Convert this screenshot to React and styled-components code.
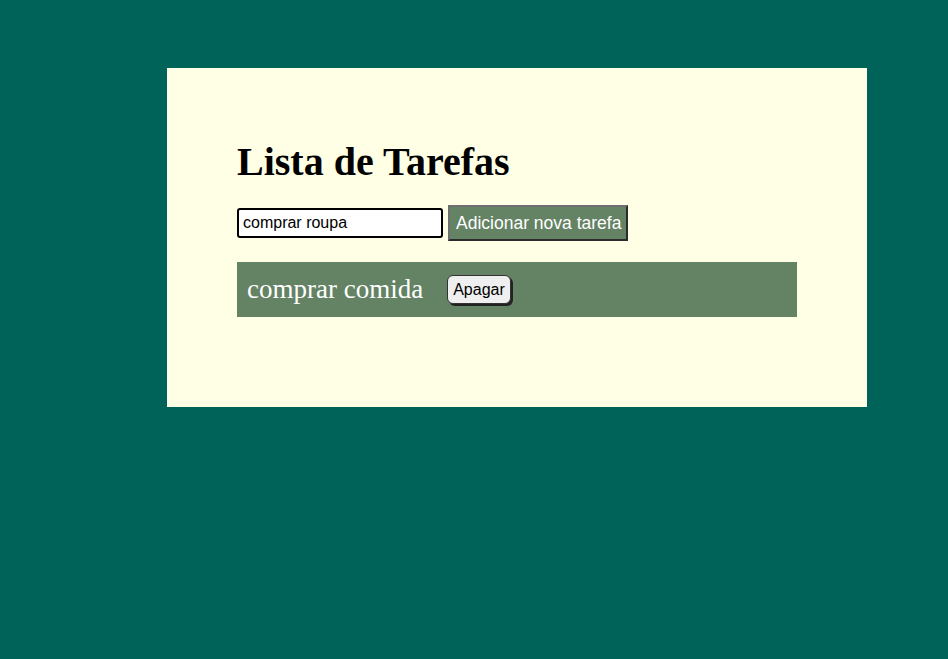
import React, { useState } from "react";
import styled, { createGlobalStyle } from "styled-components";

const Global = createGlobalStyle`
  html, body {
    margin: 0;
    padding: 0;
    background-color: #00635a;
    min-height: 100vh;
  }
`;

const Page = styled.div`
  padding: 68px 0 0 167px;
`;

const Card = styled.div`
  background-color: #ffffe6;
  width: 560px;
  padding: 72px 70px 90px 70px;
  font-family: "Liberation Serif", "Times New Roman", serif;
`;

const Title = styled.h1`
  margin: 0 0 21px 0;
  font-size: 40px;
  font-weight: bold;
  line-height: 1.1;
  color: #000;
`;

const Form = styled.div`
  display: flex;
  align-items: center;
  gap: 5px;
  margin-bottom: 21px;
`;

const Input = styled.input`
  width: 206px;
  height: 30px;
  box-sizing: border-box;
  border: 2px solid #000;
  border-radius: 3px;
  padding: 0 4px;
  font-family: "Liberation Sans", Arial, sans-serif;
  font-size: 16px;
  color: #000;
  background: #fff;
  outline: none;
`;

const AddBtn = styled.button`
  height: 36px;
  box-sizing: border-box;
  background-color: #648264;
  color: #fff;
  border: 2px solid;
  border-color: #6f6f6f #2b2b2b #2b2b2b #6f6f6f;
  padding: 0 5px 0 6px;
  font-family: "Liberation Sans", Arial, sans-serif;
  font-size: 17.5px;
  cursor: pointer;
`;

const List = styled.ul`
  list-style: none;
  margin: 0;
  padding: 0;
`;

const Item = styled.li`
  display: flex;
  align-items: center;
  height: 55px;
  box-sizing: border-box;
  padding: 0 10px;
  background-color: #648264;
  color: #fff;
  font-size: 27px;
`;

const DelBtn = styled.button`
  margin-left: 24px;
  height: 29px;
  box-sizing: border-box;
  padding: 0 5px;
  background: #efefef;
  color: #000;
  border: 1px solid #333;
  border-radius: 6px;
  box-shadow: 2px 2px 0 #222;
  font-family: "Liberation Sans", Arial, sans-serif;
  font-size: 16px;
  cursor: pointer;
`;

export default function App() {
  const [text, setText] = useState("comprar roupa");
  const [tasks, setTasks] = useState(["comprar comida"]);

  const addTask = () => {
    if (!text.trim()) return;
    setTasks([...tasks, text]);
    setText("");
  };

  const removeTask = (i) => {
    setTasks(tasks.filter((_, idx) => idx !== i));
  };

  return (
    <>
      <Global />
      <Page>
        <Card>
          <Title>Lista de Tarefas</Title>
          <Form>
            <Input value={text} onChange={(e) => setText(e.target.value)} />
            <AddBtn onClick={addTask}>Adicionar nova tarefa</AddBtn>
          </Form>
          <List>
            {tasks.map((t, i) => (
              <Item key={i}>
                {t}
                <DelBtn onClick={() => removeTask(i)}>Apagar</DelBtn>
              </Item>
            ))}
          </List>
        </Card>
      </Page>
    </>
  );
}
